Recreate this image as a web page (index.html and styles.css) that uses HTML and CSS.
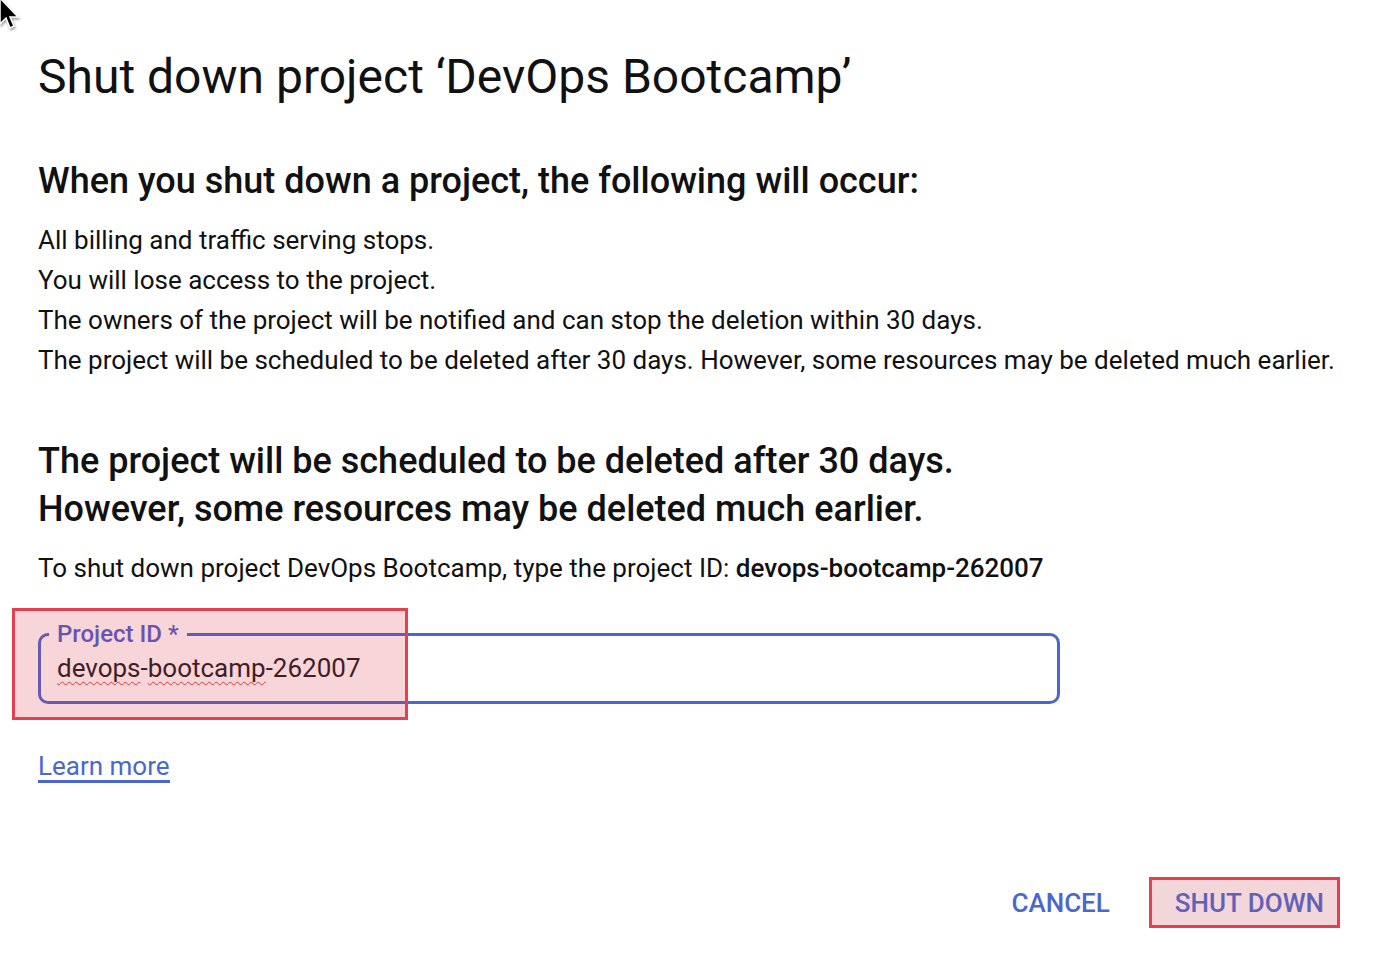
FILE: index.html
```html
<!DOCTYPE html>
<html>
<head>
<meta charset="utf-8">
<link rel="stylesheet" href="styles.css">
</head>
<body>
<svg class="cursor" width="26" height="34" viewBox="0 0 26 34">
  <path d="M1 -2 L1 24 L7 18 L11 28 L15 26 L11 17 L19 17 Z" fill="#000" stroke="#fff" stroke-width="1.5"/>
</svg>
<main class="dialog">
  <h1 class="title">Shut down project ‘DevOps Bootcamp’</h1>
  <h2 class="subtitle">When you shut down a project, the following will occur:</h2>
  <ul class="effects">
    <li>All billing and traffic serving stops.</li>
    <li>You will lose access to the project.</li>
    <li>The owners of the project will be notified and can stop the deletion within 30 days.</li>
    <li>The project will be scheduled to be deleted after 30 days. However, some resources may be deleted much earlier.</li>
  </ul>
  <h2 class="warning">The project will be scheduled to be deleted after 30 days.<br>However, some resources may be deleted much earlier.</h2>
  <p class="instruct">To shut down project DevOps Bootcamp, type the project ID: <b>devops-bootcamp-262007</b></p>
  <div class="field-wrap">
    <fieldset class="field">
      <legend class="label">Project ID *</legend>
      <div class="value"><span class="misspell">devops</span>-<span class="misspell">bootcamp</span>-262007</div>
    </fieldset>
    <div class="highlight"></div>
  </div>
  <a class="learn" href="#">Learn more</a>
  <div class="actions">
    <button class="btn">CANCEL</button>
    <button class="btn btn-marked">SHUT DOWN</button>
  </div>
</main>
</body>
</html>
```

FILE: styles.css
```css
html, body {
  margin: 0;
  padding: 0;
  background: #fff;
}
body {
  font-family: Roboto, "Liberation Sans", sans-serif;
  color: #111;
  width: 1380px;
  height: 966px;
  overflow: hidden;
  position: relative;
}
.cursor {
  position: absolute;
  left: -1px;
  top: 0;
  filter: drop-shadow(1px 2px 1px rgba(0,0,0,0.35));
}
.dialog {
  padding: 0 40px 0 38px;
}
.title {
  font-size: 48px;
  font-weight: 400;
  line-height: 56px;
  margin: 49px 0 0;
  color: #111;
}
.subtitle {
  font-size: 36px;
  font-weight: 500;
  line-height: 40px;
  margin: 56px 0 0;
  color: #111;
}
.effects {
  list-style: none;
  padding: 0;
  margin: 19px 0 0;
  font-size: 26px;
  line-height: 40px;
}
.warning {
  font-size: 36px;
  font-weight: 500;
  line-height: 48px;
  margin: 57px 0 0;
  color: #111;
}
.instruct {
  font-size: 26px;
  line-height: 32px;
  margin: 19px 0 0;
}
.instruct b {
  font-weight: 500;
}
.field-wrap {
  position: relative;
  margin-top: 38px;
  width: 1022px;
}
.field {
  margin: 0;
  border: 3px solid #4a67cf;
  border-radius: 10px;
  padding: 0 16px;
  height: 82px;
  box-sizing: border-box;
}
.label {
  font-size: 24px;
  font-weight: 500;
  color: #4a5fcc;
  padding: 0 8px;
  margin-left: -8px;
  line-height: 24px;
}
.value {
  font-size: 26px;
  line-height: 32px;
  color: #1a1a1d;
  margin-top: 6px;
}
.misspell {
  text-decoration: underline wavy #e53935;
  text-decoration-thickness: 1px;
  text-underline-offset: 4px;
  text-decoration-skip-ink: none;
}
.highlight {
  position: absolute;
  left: -26px;
  top: -14px;
  width: 396px;
  height: 112px;
  box-sizing: border-box;
  border: 3px solid #e5404e;
  background: rgba(215, 45, 60, 0.2);
}
.learn {
  display: block;
  width: fit-content;
  margin-top: 48px;
  font-size: 26px;
  line-height: 28px;
  color: #4a67cf;
  text-decoration: none;
  border-bottom: 3px solid #4a67cf;
}
.actions {
  display: flex;
  justify-content: flex-end;
  align-items: center;
  gap: 13px;
  margin-top: 94px;
}
.btn {
  font-family: Roboto, "Liberation Sans", sans-serif;
  font-size: 26px;
  font-weight: 500;
  color: #4a67cf;
  background: none;
  border: 3px solid transparent;
  padding: 0 23px;
  height: 51px;
  cursor: pointer;
}
.btn-marked {
  border-color: #e5404e;
  background: #f3d6d9;
  color: #6062b8;
  padding: 0 13px 0 23px;
}
```
